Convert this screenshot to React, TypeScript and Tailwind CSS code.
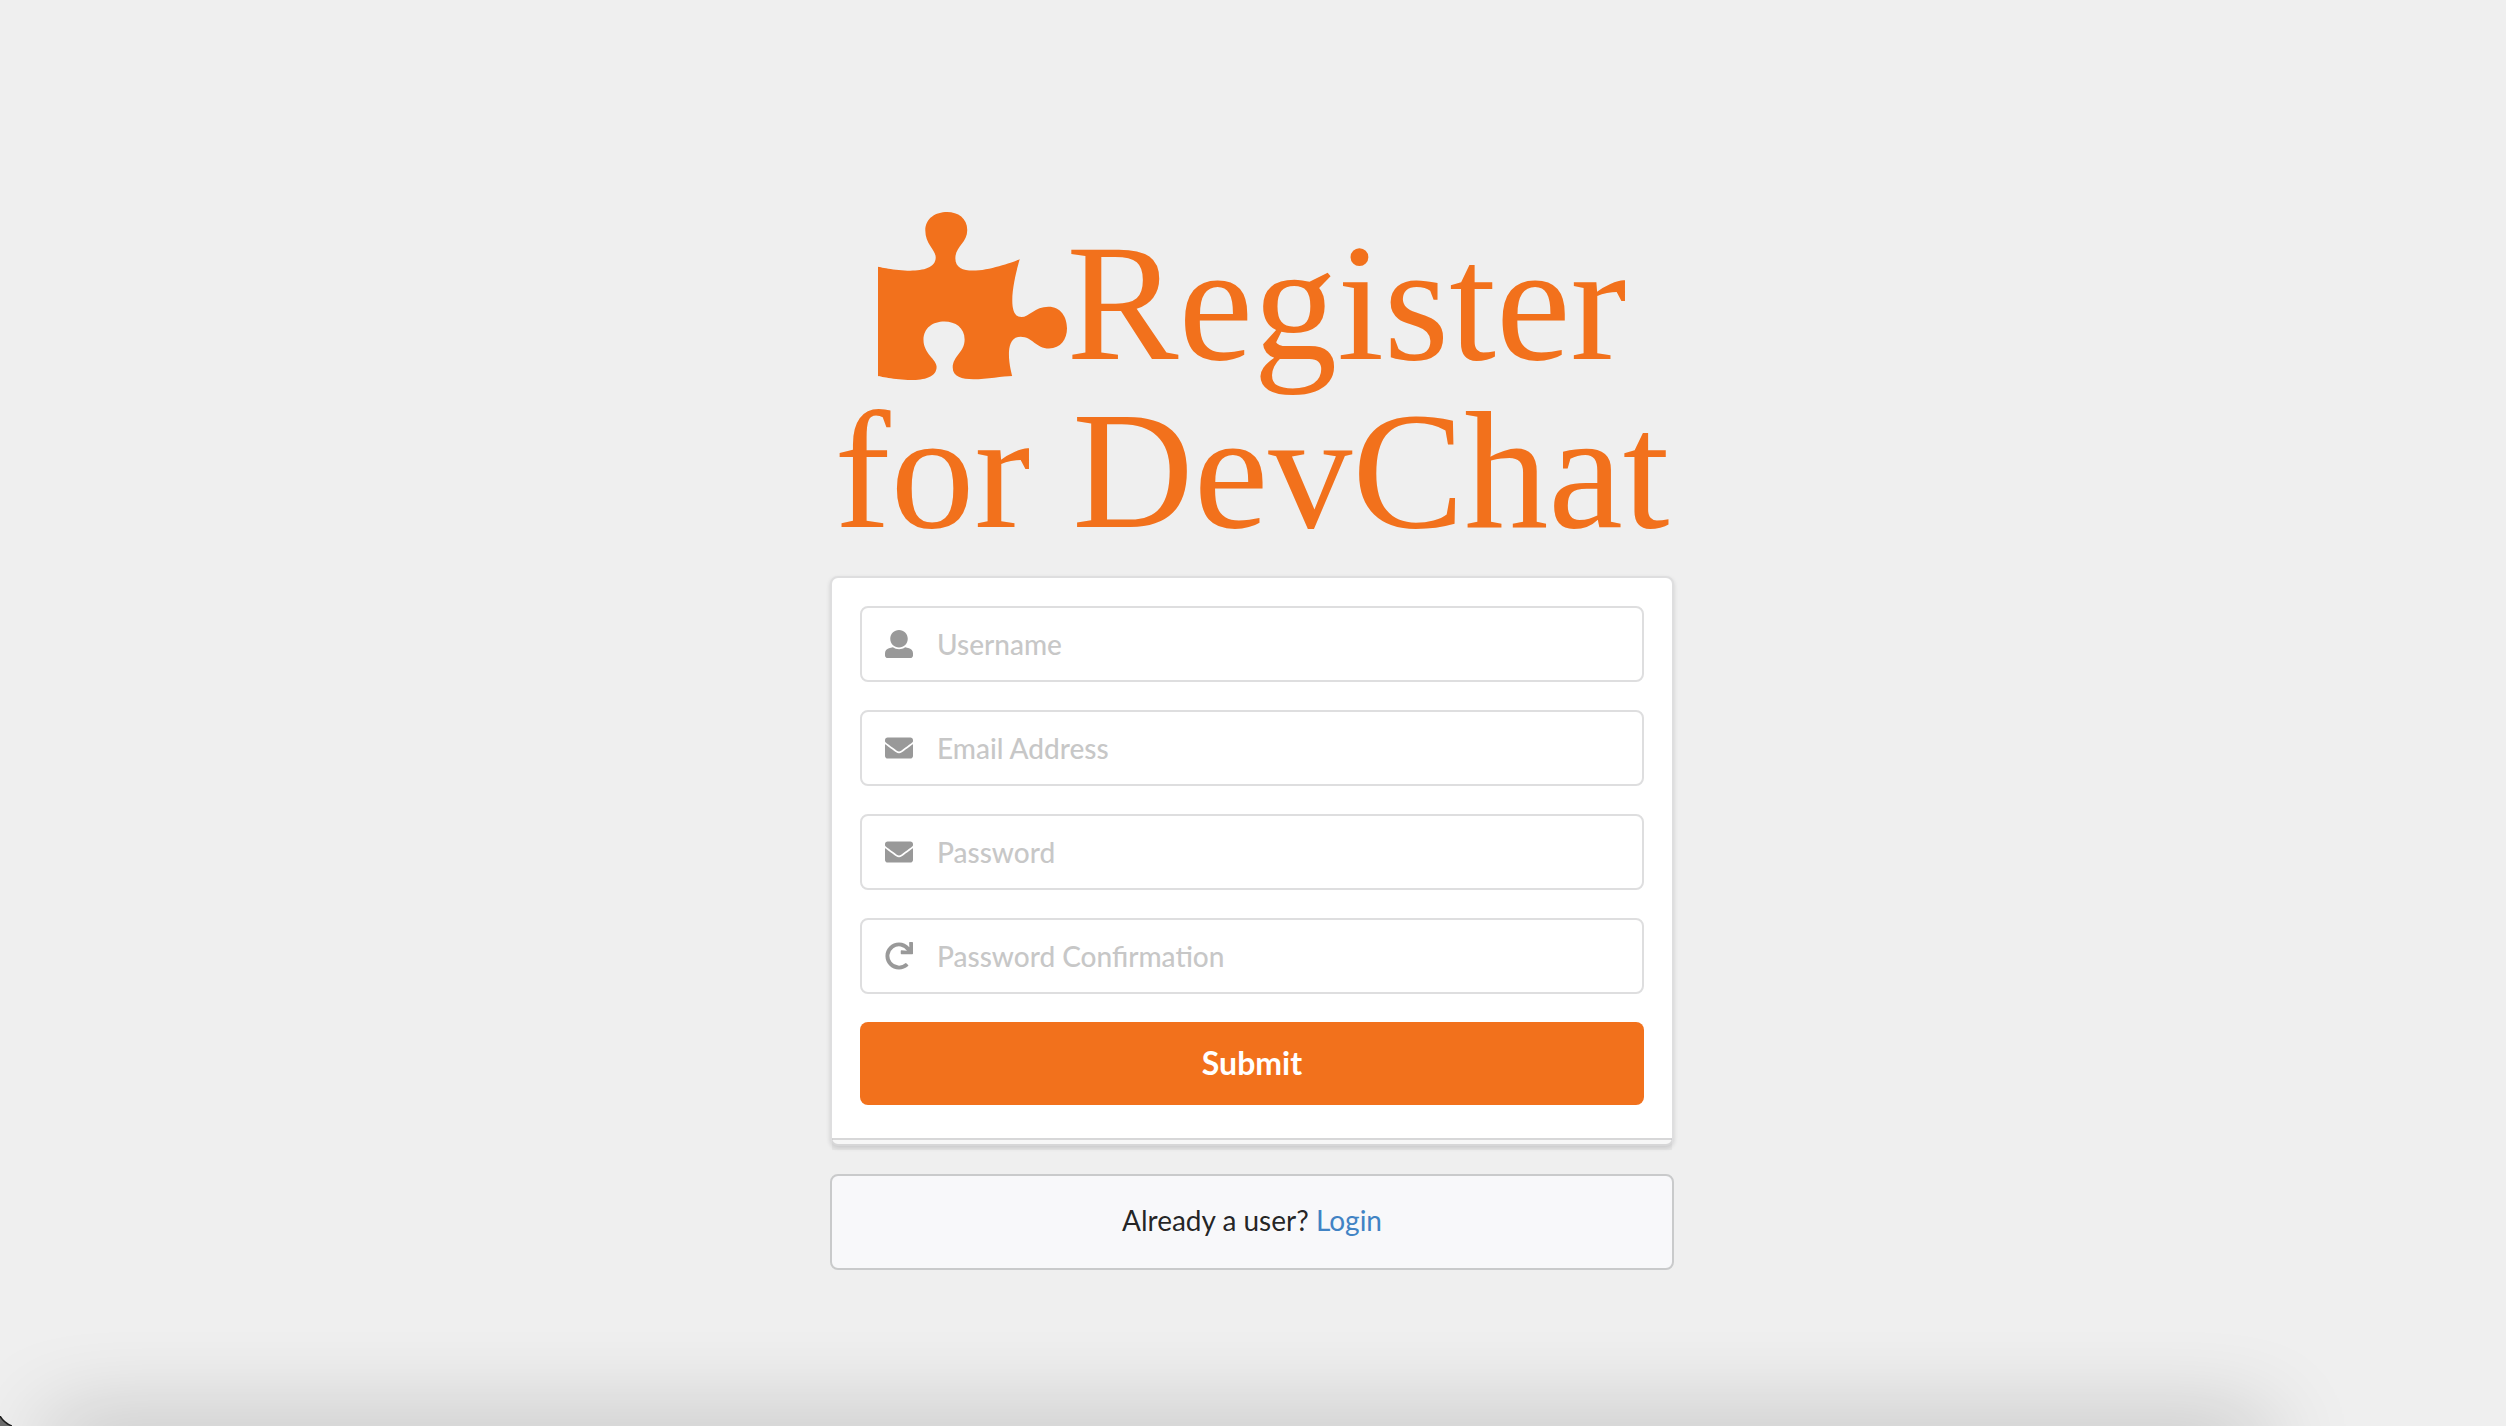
import { useState } from "react";
import type { ChangeEvent, FormEvent, ReactNode } from "react";
import { FaEnvelope, FaPuzzlePiece, FaRedo } from "react-icons/fa";

type RegisterForm = {
  username: string;
  email: string;
  password: string;
  passwordConfirmation: string;
};

function UserIcon() {
  return (
    <svg viewBox="0 0 512 512" fill="currentColor" className="size-7">
      <path d="M256 0c88.366 0 160 71.634 160 160s-71.634 160-160 160S96 248.366 96 160 167.634 0 256 0zm183.283 333.821l-71.313-17.828c-74.923 53.89-165.738 41.864-223.94 0l-71.313 17.828C29.981 344.505 0 382.903 0 426.955V464c0 26.51 21.49 48 48 48h416c26.51 0 48-21.49 48-48v-37.045c0-44.052-29.981-82.45-72.717-93.134z" />
    </svg>
  );
}

const FIELDS: { name: keyof RegisterForm; label: string; type: string; icon: ReactNode }[] = [
  { name: "username", label: "Username", type: "text", icon: <UserIcon /> },
  { name: "email", label: "Email Address", type: "email", icon: <FaEnvelope className="size-7" /> },
  { name: "password", label: "Password", type: "password", icon: <FaEnvelope className="size-7" /> },
  { name: "passwordConfirmation", label: "Password Confirmation", type: "password", icon: <FaRedo className="size-7" /> },
];

export default function Register() {
  const [form, setForm] = useState<RegisterForm>({
    username: "",
    email: "",
    password: "",
    passwordConfirmation: "",
  });

  const handleChange = (e: ChangeEvent<HTMLInputElement>) => {
    const { name, value } = e.target;
    setForm((prev) => ({ ...prev, [name]: value }));
  };

  const handleSubmit = (e: FormEvent<HTMLFormElement>) => {
    e.preventDefault();
  };

  return (
    <main className="relative flex min-h-screen flex-col items-center justify-center overflow-hidden bg-[#efefef] pt-14 pr-0.5 font-['Lato',sans-serif] text-[28px] leading-10 text-black/87">
      <div className="w-full max-w-[844px]">
        <h1 className="text-center font-['Liberation_Serif',serif] text-[168px] leading-[168px] font-normal text-[#f2711c]">
          <FaPuzzlePiece className="inline h-[168px] w-[189px] align-[-21px]" />
          Register
          <br />
          for DevChat
        </h1>

        <form
          onSubmit={handleSubmit}
          className="relative mt-[22px] rounded-lg border-2 border-[#dededf] bg-white px-7 pt-7 pb-[39px] shadow-[0_2px_4px_rgba(34,36,38,0.15)]"
        >
          <div className="flex flex-col gap-7">
            {FIELDS.map((field) => (
              <div key={field.name} className="relative">
                <label htmlFor={field.name} className="absolute inset-y-0 left-0 flex w-[78px] items-center justify-center text-[#999]">
                  {field.icon}
                </label>
                <input
                  id={field.name}
                  name={field.name}
                  type={field.type}
                  value={form[field.name]}
                  onChange={handleChange}
                  placeholder={field.label}
                  aria-label={field.label}
                  className="block h-[76px] w-full rounded-lg border-2 border-[#dededf] bg-white pr-7 pl-[75px] font-medium outline-none placeholder:text-[#c7c7c7] focus:border-[#85b7d9]"
                />
              </div>
            ))}
            <button type="submit" className="h-[83px] w-full cursor-pointer rounded-lg bg-[#f2711c] pb-0.5 text-[32px] font-bold text-white hover:bg-[#f26202]">
              Submit
            </button>
          </div>
          {/* second sheet of the stacked card */}
          <div className="absolute inset-x-0 -bottom-1.5 h-3 border-t-2 border-[#222426]/15 bg-black/3" />
        </form>

        <div className="mt-7 rounded-lg border-2 border-[#c9cacb] bg-[#f8f8fa] pt-6 pb-7 text-center">
          Already a user?{" "}
          <a href="#login" className="text-[#4183c4]">
            Login
          </a>
        </div>
      </div>

      {/* soft shadow along the bottom edge */}
      <div className="pointer-events-none absolute right-60 -bottom-10 left-12 h-10 shadow-[0_0_90px_rgba(0,0,0,0.3)]" />
      <svg viewBox="0 0 12 10" className="absolute bottom-0 left-0 h-2.5 w-3">
        <path d="M0 0Q4 7 12 10H0z" fill="#6b6b6b" />
        <path d="M0 0Q4 7 12 10" fill="none" stroke="#1c1c1c" strokeWidth="1.5" />
      </svg>
    </main>
  );
}
